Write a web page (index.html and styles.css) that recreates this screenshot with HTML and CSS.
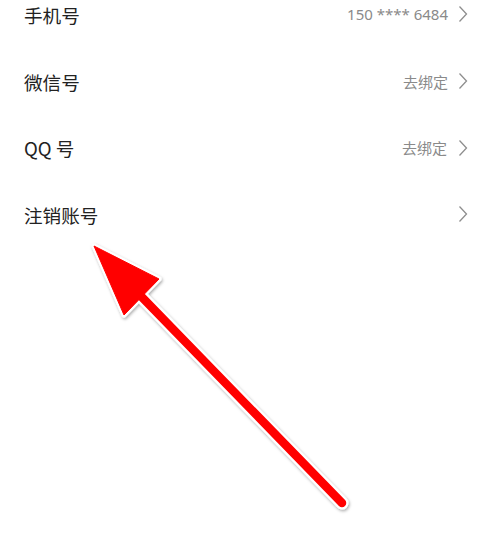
FILE: index.html
```html
<!DOCTYPE html>
<html lang="zh-CN">
<head>
<meta charset="utf-8">
<link rel="stylesheet" href="styles.css">
</head>
<body>
<div class="page">
  <ul class="list">
    <li class="row"><span class="label">手机号</span><span class="value">150 **** 6484</span><svg class="chev" viewBox="0 0 10 18"><path d="M1.5 1.5 L8.5 9 L1.5 16.5"/></svg></li>
    <li class="row"><span class="label">微信号</span><span class="value">去绑定</span><svg class="chev" viewBox="0 0 10 18"><path d="M1.5 1.5 L8.5 9 L1.5 16.5"/></svg></li>
    <li class="row"><span class="label">QQ 号</span><span class="value wide">去绑定</span><svg class="chev" viewBox="0 0 10 18"><path d="M1.5 1.5 L8.5 9 L1.5 16.5"/></svg></li>
    <li class="row"><span class="label">注销账号</span><span class="value"></span><svg class="chev" viewBox="0 0 10 18"><path d="M1.5 1.5 L8.5 9 L1.5 16.5"/></svg></li>
  </ul>
  <svg class="arrow" viewBox="0 0 494 545" width="494" height="545">
    <defs>
      <filter id="sh" x="-10%" y="-10%" width="120%" height="120%">
        <feDropShadow dx="1" dy="1.5" stdDeviation="1.5" flood-color="#000" flood-opacity="0.35"/>
      </filter>
    </defs>
    <g filter="url(#sh)">
      <line x1="135" y1="290" x2="342" y2="503" stroke="#fff" stroke-width="13" stroke-linecap="round"/>
      <polygon points="94,246 159,279 124,315" fill="#fff" stroke="#fff" stroke-width="5" stroke-linejoin="round"/>
    </g>
    <line x1="135" y1="290" x2="342" y2="503" stroke="#ff0000" stroke-width="8.5" stroke-linecap="round"/>
    <polygon points="94,246 159,279 124,315" fill="#ff0000" stroke="#ff0000" stroke-width="1" stroke-linejoin="round"/>
  </svg>
</div>
</body>
</html>
```
FILE: styles.css
```css
html, body {
  margin: 0;
  padding: 0;
  background: #fff;
}
body {
  width: 494px;
  height: 545px;
  overflow: hidden;
  font-family: "Noto Sans", "Noto Sans CJK SC", sans-serif;
}
.page {
  position: relative;
  display: flow-root;
  width: 494px;
  height: 545px;
}
.list {
  list-style: none;
  margin: -19px 0 0 0;
  padding: 0 26px 0 24px;
}
.row {
  display: flex;
  align-items: center;
  height: 66.7px;
}
.label {
  flex: 1;
  font-family: "Noto Sans CJK SC", sans-serif;
  font-size: 18.6px;
  color: #222;
}
.value {
  font-size: 15px;
  color: #8a8a8a;
  margin-right: 10px;
  font-family: "Noto Sans", "Noto Sans CJK SC", sans-serif;
}
.value.wide {
  margin-right: 11px;
}
.chev {
  width: 10px;
  height: 18px;
  fill: none;
  stroke: #8e8e8e;
  stroke-width: 1.3;
}
.arrow {
  position: absolute;
  left: 0;
  top: 0;
  pointer-events: none;
}
```
